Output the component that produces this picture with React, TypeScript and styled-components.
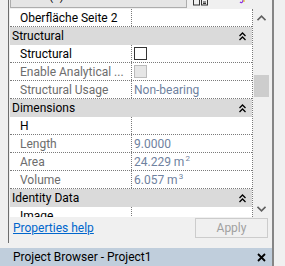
import React from "react";
import styled, { createGlobalStyle } from "styled-components";

const GlobalStyle = createGlobalStyle`
  html, body {
    margin: 0;
    padding: 0;
    background: #f0f0f0;
  }
  body {
    font-family: Roboto, "Open Sans", "Liberation Sans", sans-serif;
    font-size: 12px;
    color: #000;
  }
`;

type Prop = {
  kind: "prop";
  name: string;
  value?: React.ReactNode;
  readOnly?: boolean;
  check?: "on" | "disabled";
};
type Group = { kind: "group"; title: string };
type Row = Prop | Group;

const rows: Row[] = [
  { kind: "prop", name: "Oberfläche Seite 2" },
  { kind: "group", title: "Structural" },
  { kind: "prop", name: "Structural", check: "on" },
  { kind: "prop", name: "Enable Analytical ...", readOnly: true, check: "disabled" },
  { kind: "prop", name: "Structural Usage", readOnly: true, value: "Non-bearing" },
  { kind: "group", title: "Dimensions" },
  { kind: "prop", name: "H" },
  { kind: "prop", name: "Length", readOnly: true, value: "9.0000" },
  {
    kind: "prop",
    name: "Area",
    readOnly: true,
    value: (
      <>
        24.229 m<sup>2</sup>
      </>
    ),
  },
  {
    kind: "prop",
    name: "Volume",
    readOnly: true,
    value: (
      <>
        6.057 m<sup>3</sup>
      </>
    ),
  },
  { kind: "group", title: "Identity Data" },
  { kind: "prop", name: "Image" },
];

const CollapseIcon = () => (
  <svg width="7" height="9" viewBox="0 0 7 9">
    <path d="M0.5 4 L3.5 1 L6.5 4 M0.5 8 L3.5 5 L6.5 8" fill="none" stroke="#000" strokeWidth="1.3" />
  </svg>
);

const Chevron = ({ down }: { down?: boolean }) => (
  <svg width="9" height="6" viewBox="0 0 9 6">
    <path
      d={down ? "M0.5 0.8 L4.5 4.8 L8.5 0.8" : "M0.5 5.2 L4.5 1.2 L8.5 5.2"}
      fill="none"
      stroke="#606060"
      strokeWidth="1.6"
    />
  </svg>
);

export default function App() {
  return (
    <Screen>
      <GlobalStyle />
      <MainColumn>
        <PropertiesPanel>
          <TypeStrip>
            <TypeSelector>
              <span>Walls (1)</span>
            </TypeSelector>
            <EditTypeIcon>
              <svg width="15" height="9" viewBox="0 0 15 9">
                <rect x="0.5" y="-3" width="6" height="8" fill="none" stroke="#333" />
                <rect x="8.5" y="-2" width="6" height="7" fill="none" stroke="#333" />
                <path d="M10 2 H13 M10 3.5 H13" stroke="#333" />
              </svg>
            </EditTypeIcon>
            <ColorIcon>
              <svg width="6" height="4" viewBox="0 0 6 4">
                <path d="M4 0 C4 3 2 3 1 2" fill="none" stroke="#8a2be2" strokeWidth="1.2" />
                <path d="M5 0 V2" stroke="#e0b000" strokeWidth="1" />
              </svg>
            </ColorIcon>
          </TypeStrip>
          <GridArea>
            <Viewport>
              {rows.map((r, i) =>
                r.kind === "group" ? (
                  <GroupRow key={i}>
                    <span>{r.title}</span>
                    <CollapseIcon />
                  </GroupRow>
                ) : (
                  <PropRow key={i}>
                    <NameCell $readOnly={r.readOnly}>{r.name}</NameCell>
                    <ValueCell $readOnly={r.readOnly}>
                      {r.check ? <CheckBox $disabled={r.check === "disabled"} /> : r.value}
                    </ValueCell>
                  </PropRow>
                )
              )}
            </Viewport>
            <ScrollBar>
              <ScrollButton>
                <Chevron />
              </ScrollButton>
              <Track>
                <Thumb />
              </Track>
              <ScrollButton>
                <Chevron down />
              </ScrollButton>
            </ScrollBar>
          </GridArea>
          <Footer>
            <HelpLink href="#">Properties help</HelpLink>
            <ApplyButton disabled>Apply</ApplyButton>
          </Footer>
        </PropertiesPanel>
        <BrowserHeader>
          <span>Project Browser - Project1</span>
          <CloseX>
            <svg width="9" height="9" viewBox="0 0 9 9">
              <path d="M1 1 L8 8 M8 1 L1 8" stroke="#000" strokeWidth="1.8" />
            </svg>
          </CloseX>
        </BrowserHeader>
      </MainColumn>
      <Splitter />
    </Screen>
  );
}

const Screen = styled.div`
  width: 285px;
  height: 266px;
  display: grid;
  grid-template-columns: 272px 2px 11px;
  overflow: hidden;
  background: #f0f0f0;
`;

const MainColumn = styled.div`
  display: flex;
  flex-direction: column;
  overflow: hidden;
`;

const Splitter = styled.div`
  background: #858585;
`;

const PropertiesPanel = styled.div`
  flex: 0 0 243px;
  margin-left: 8px;
  border-left: 1px solid #6e6e6e;
  display: flex;
  flex-direction: column;
  margin-bottom: 5px;
`;

const TypeStrip = styled.div`
  flex: 0 0 9px;
  display: flex;
  align-items: flex-end;
  overflow: hidden;
  padding-left: 1px;
`;

const TypeSelector = styled.div`
  flex: 0 0 177px;
  height: 22px;
  margin-bottom: 1px;
  box-sizing: border-box;
  border: 1px solid #adadad;
  background: #e5e5e5;
  display: flex;
  align-items: flex-end;
  padding: 0 0 0 6px;
  line-height: 1;
  span {
    margin-bottom: 5px;
  }
`;

const EditTypeIcon = styled.div`
  margin-left: 6px;
  align-self: flex-start;
  display: flex;
`;

const ColorIcon = styled.div`
  margin-left: 31px;
  align-self: flex-start;
  display: flex;
`;

const GridArea = styled.div`
  display: flex;
  flex: 0 0 208px;
  padding-left: 1px;
`;

const Viewport = styled.div`
  flex: 0 0 243px;
  height: 208px;
  overflow: hidden;
  background: #fff;
  box-sizing: border-box;
  border-right: 1px dotted #7a7a7a;
`;

const GroupRow = styled.div`
  height: 18px;
  background: #dadada;
  display: flex;
  align-items: center;
  justify-content: space-between;
  padding: 0 6px 0 2px;
  svg {
    display: block;
  }
`;

const PropRow = styled.div`
  height: 18px;
  display: flex;
  box-sizing: border-box;
  border-bottom: 1px dotted #7a7a7a;
`;

const NameCell = styled.div<{ $readOnly?: boolean }>`
  flex: 0 0 122px;
  box-sizing: border-box;
  padding-left: 10px;
  border-right: 1px dotted #7a7a7a;
  display: flex;
  align-items: center;
  white-space: nowrap;
  overflow: hidden;
  color: ${(p) => (p.$readOnly ? "#6d6d6d" : "#000")};
`;

const ValueCell = styled.div<{ $readOnly?: boolean }>`
  flex: 1;
  padding-left: 2px;
  display: flex;
  align-items: center;
  white-space: nowrap;
  color: ${(p) => (p.$readOnly ? "#6f82a0" : "#000")};
  sup {
    font-size: 8px;
    margin-top: -6px;
    margin-left: 1px;
  }
`;

const CheckBox = styled.span<{ $disabled?: boolean }>`
  width: 13px;
  height: 13px;
  box-sizing: border-box;
  border: 1px solid ${(p) => (p.$disabled ? "#bcbcbc" : "#333")};
  background: ${(p) => (p.$disabled ? "#e6e6e6" : "#fff")};
`;

const ScrollBar = styled.div`
  flex: 0 0 17px;
  display: flex;
  flex-direction: column;
  background: #f0f0f0;
`;

const ScrollButton = styled.div`
  height: 17px;
  display: flex;
  align-items: center;
  justify-content: center;
`;

const Track = styled.div`
  flex: 1;
  padding-top: 49px;
`;

const Thumb = styled.div`
  height: 22px;
  margin: 0 1px;
  background: #cdcdcd;
`;

const Footer = styled.div`
  flex: 1;
  display: flex;
  align-items: center;
  justify-content: space-between;
  padding: 0 4px 4px 4px;
`;

const HelpLink = styled.a`
  color: #0066cc;
  text-decoration: underline;
`;

const ApplyButton = styled.button`
  width: 73px;
  height: 20px;
  box-sizing: border-box;
  border: 1px solid #cccccc;
  background: #f0f0f0;
  color: #a0a0a0;
  font-family: inherit;
  font-size: 12px;
  padding: 0;
`;

const BrowserHeader = styled.div`
  flex: 0 0 18px;
  background: #c0cedc;
  display: flex;
  align-items: center;
  justify-content: space-between;
  padding: 0 6px 0 13px;
`;

const CloseX = styled.div`
  display: flex;
`;
